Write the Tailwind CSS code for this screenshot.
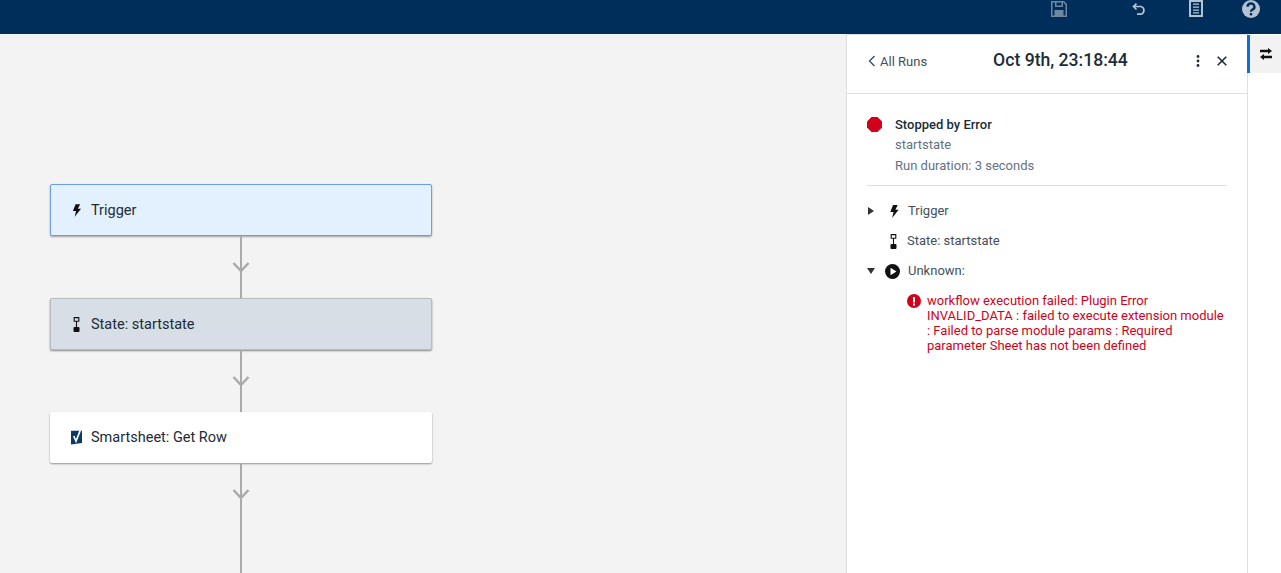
<!DOCTYPE html>
<html>
<head>
<meta charset="utf-8">
<script src="https://cdn.jsdelivr.net/npm/@tailwindcss/browser@4"></script>
</head>
<body class="h-[573px] w-[1281px] overflow-hidden bg-white font-['Roboto',sans-serif] text-[#212b36]">
<header class="flex h-[34px] items-start bg-[#002e5a] pl-[1051px]">
  <svg class="mt-[1px] h-[16px] w-[16px]" viewBox="0 0 16 16"><path fill="#6f87a0" fill-rule="evenodd" d="M0 0h13l3 3v13H0zM1.500 1.500v13h13V4l-2-2.500H12V6H4V1.500zM5.500 1.500V4.500h5v-3zM3.500 9h9v5.500h-9z"/></svg>
  <svg class="ml-[65px] mt-[3px] h-[12px] w-[14px]" viewBox="0 0 14 12"><path fill="none" stroke="#b4c2d1" stroke-width="1.700" d="M1.500 3.500h7.500a4 4 0 0 1 0 7.700H5M4.500.6 1.500 3.500 4.500 6.500"/></svg>
  <svg class="ml-[43px] h-[17px] w-[14px]" viewBox="0 0 14 17"><path fill="#b4c2d1" fill-rule="evenodd" d="M0 0h14v17H0zM2 2v13h10V2zM4 3.500h6v1.300H4zM4 6.500h6v1.300H4zM4 9.500h6v1.300H4zM4 12.300h6v1.300H4z"/></svg>
  <svg class="ml-[39px] h-[18px] w-[18px]" viewBox="0 0 18 18"><circle cx="9" cy="9" r="9" fill="#b4c2d1"/><path fill="none" stroke="#002e5a" stroke-width="2.400" d="M5.600 6.800a3.400 3.200 0 1 1 5 2.700c-1 .6-1.600 1.100-1.600 2.300"/><rect x="7.800" y="13" width="2.400" height="2.400" fill="#002e5a"/></svg>
</header>
<div class="flex h-[539px]">
  <main class="w-[846px] overflow-hidden bg-[#f3f3f3] pl-[50px] pt-[150px]">
    <div class="flex w-[382px] flex-col items-center">
      <div class="flex h-[52px] w-full items-center rounded-[2px] border border-[#6d9eeb] bg-[#e3f0fd] pl-[21px] text-[14.500px] shadow-[0_1px_2px_rgba(0,0,0,0.35)]">
        <svg class="h-[13px] w-[9px]" viewBox="0 0 10 14"><path fill="#111" d="M4 0h5L6.500 5H10L3 14l1.500-6.500H1z"/></svg>
        <span class="ml-[10px] mt-[1px]">Trigger</span>
      </div>
      <svg class="h-[62px] w-[20px] shrink-0" viewBox="0 0 20 62"><path fill="none" stroke="#aaa" stroke-width="2" d="M10 0v62"/><path fill="none" stroke="#aaa" stroke-width="2.500" d="M2.500 27l7.500 8 7.500-8"/></svg>
      <div class="flex h-[52px] w-full items-center rounded-[2px] border border-[#bbb] bg-[#d7dee5] pl-[22px] text-[14.500px] shadow-[0_1px_2px_rgba(0,0,0,0.45)]">
        <svg class="h-[15px] w-[7px]" viewBox="0 0 7 15"><path fill="none" stroke="#111" stroke-width="1.100" d="M1.200 .6h4.600v3.600H1.200zM3.500 4.200v6"/><rect x=".5" y="10" width="6" height="5" rx="1" fill="#111"/></svg>
        <span class="ml-[11px] mt-[1px]">State: startstate</span>
      </div>
      <svg class="h-[62px] w-[20px] shrink-0" viewBox="0 0 20 62"><path fill="none" stroke="#aaa" stroke-width="2" d="M10 0v62"/><path fill="none" stroke="#aaa" stroke-width="2.500" d="M2.500 27l7.500 8 7.500-8"/></svg>
      <div class="flex h-[51px] w-full items-center rounded-[2px] bg-white pb-[1px] pl-[21px] text-[14.500px] shadow-[0_1px_2px_rgba(0,0,0,0.4)]">
        <svg class="mt-[1px] h-[15px] w-[11px]" viewBox="0 0 12 15"><path fill="#0a3a66" d="M0 0h12v13.500L0 15z"/><path fill="none" stroke="#fff" stroke-width="1.800" d="M3 6l2.500 5.500L10 0"/></svg>
        <span class="ml-[9px] mt-[1px]">Smartsheet: Get Row</span>
      </div>
      <svg class="h-[120px] w-[20px] shrink-0" viewBox="0 0 20 120"><path fill="none" stroke="#aaa" stroke-width="2" d="M10 0v120"/><path fill="none" stroke="#aaa" stroke-width="2.500" d="M2.500 27l7.500 8 7.500-8"/></svg>
    </div>
  </main>
  <aside class="w-[401px] border-l border-t border-[#e0e0e0]">
    <div class="flex h-[59px] items-center border-b border-[#e0e0e0] pb-[6px] pl-[21px] pr-[19px]">
      <svg class="h-[12px] w-[8px]" viewBox="0 0 8 12"><path fill="none" stroke="#454f5b" stroke-width="1.400" d="M6.500 1 1.500 6l5 5"/></svg>
      <span class="ml-[4px] mt-[2px] text-[13px] text-[#454f5b]">All Runs</span>
      <span class="mb-[2px] ml-[66px] text-[17.600px] font-medium leading-[40px]">Oct 9th, 23:18:44</span>
      <svg class="ml-[68px] h-[14px] w-[4px]" viewBox="0 0 4 14"><circle cx="2" cy="2.500" r="1.400" fill="#212b36"/><circle cx="2" cy="7" r="1.400" fill="#212b36"/><circle cx="2" cy="11.500" r="1.400" fill="#212b36"/></svg>
      <svg class="ml-[17px] h-[10px] w-[10px]" viewBox="0 0 10 10"><path fill="none" stroke="#212b36" stroke-width="1.600" d="M.7.7l8.600 8.600M9.300.7.700 9.300"/></svg>
    </div>
    <div class="mx-[20px] border-b border-[#e0e0e0] pb-[9px] pt-[20px]">
      <div class="flex">
        <svg class="mt-[3px] h-[15px] w-[15px]" viewBox="0 0 15 15"><path fill="#d0021b" d="M4.500 0h6L15 4.500v6L10.500 15h-6L0 10.500v-6z"/></svg>
        <div class="ml-[13px] text-[13px] leading-[21px] text-[#637381]">
          <div class="-mb-[1px] font-medium text-[#212b36]">Stopped by Error</div>
          <div>startstate</div>
          <div>Run duration: 3 seconds</div>
        </div>
      </div>
    </div>
    <div class="ml-[20px] pt-[10px] text-[13px] text-[#454f5b]">
      <div class="flex h-[30px] items-center">
        <svg class="ml-[1px] h-[8px] w-[6px]" viewBox="0 0 6 8"><path fill="#333" d="M0 0l6 4-6 4z"/></svg>
        <svg class="ml-[15px] h-[13px] w-[10px]" viewBox="0 0 10 14"><path fill="#111" d="M4 0h5L6.500 5H10L3 14l1.500-6.500H1z"/></svg>
        <span class="ml-[9px]">Trigger</span>
      </div>
      <div class="flex h-[30px] items-center">
        <svg class="ml-[23px] h-[15px] w-[7px]" viewBox="0 0 7 15"><path fill="none" stroke="#111" stroke-width="1.100" d="M1.200 .6h4.600v3.600H1.200zM3.500 4.200v6"/><rect x=".5" y="10" width="6" height="5" rx="1" fill="#111"/></svg>
        <span class="ml-[10px]">State: startstate</span>
      </div>
      <div class="flex h-[30px] items-center">
        <svg class="h-[6px] w-[8px]" viewBox="0 0 8 6"><path fill="#333" d="M0 0h8L4 6z"/></svg>
        <svg class="ml-[10px] h-[15px] w-[15px]" viewBox="0 0 15 15"><circle cx="7.500" cy="7.500" r="7.500" fill="#111"/><path fill="#fff" d="M5.500 3.800l6 3.700-6 3.700z"/></svg>
        <span class="ml-[8px]">Unknown:</span>
      </div>
      <div class="mt-[7px] flex pl-[40px]">
        <svg class="mt-[1px] h-[14px] w-[14px] shrink-0" viewBox="0 0 14 14"><circle cx="7" cy="7" r="7" fill="#d0021b"/><rect x="6" y="3" width="2" height="5.500" fill="#fff"/><rect x="6" y="9.500" width="2" height="2" fill="#fff"/></svg>
        <p class="ml-[6px] w-[300px] text-[13px] leading-[15px] text-[#d0021b]">workflow execution failed: Plugin Error INVALID_DATA : failed to execute extension module : Failed to parse module params : Required parameter Sheet has not been defined</p>
      </div>
    </div>
  </aside>
  <nav class="flex w-[34px] flex-col border-l border-[#e0e0e0] pt-[1px]">
    <div class="-ml-[1px] flex h-[38px] items-center justify-center border-l-[3px] border-[#0a6edc] bg-[#f2f2f2]">
      <svg class="ml-[1px] h-[12px] w-[12px]" viewBox="0 0 12 12"><path fill="#111" d="M0 1.800h8V0l4 3-4 3V4.200H0zM12 7.800H4V6L0 9l4 3v-1.800h8z"/></svg>
    </div>
  </nav>
</div>
</body>
</html>
